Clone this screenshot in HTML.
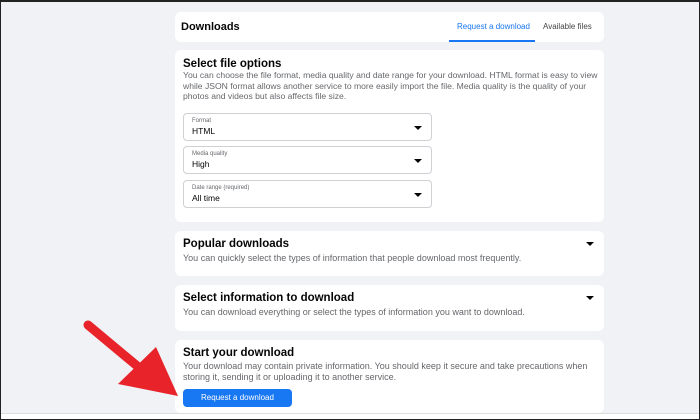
<!DOCTYPE html>
<html><head><style>
body{margin:0;width:700px;height:419px;overflow:hidden;font-family:"Liberation Sans",sans-serif;}
.frame{position:absolute;left:0;top:0;width:698px;height:417px;border:1px solid #222;border-top:2px solid #222;background:#f0f2f5;box-sizing:content-box}
.card{position:absolute;left:175px;width:429px;background:#fff;border-radius:6px;}
h2{margin:0;font-size:11.5px;font-weight:bold;color:#050505}
p{margin:0;font-size:9px;color:#65676b;line-height:10.5px}
.sel{position:absolute;left:8px;width:249px;height:28px;border:1px solid #ced0d4;border-radius:4px;box-sizing:border-box}
.sel .l{position:absolute;left:8px;top:4px;font-size:6px;color:#65676b}
.sel .v{position:absolute;left:8px;top:12px;font-size:8.5px;color:#050505}
.tri{position:absolute;width:0;height:0;border-left:4px solid transparent;border-right:4px solid transparent;border-top:4px solid #050505}
.sel .tri{right:9px;top:12px}
</style></head><body>
<div class="frame"></div>
<div class="card" style="top:12px;height:30px">
<div style="position:absolute;left:6px;top:9px;font-size:11px;font-weight:bold;color:#050505">Downloads</div>
<div style="position:absolute;left:282px;top:10px;font-size:8px;color:#1877f2">Request a download</div>
<div style="position:absolute;left:274px;top:28px;width:86px;height:2px;background:#1877f2"></div>
<div style="position:absolute;left:368px;top:10px;font-size:8px;color:#444">Available files</div>
</div>
<div class="card" style="top:50px;height:172px">
<div style="position:absolute;left:8px;top:8px;width:418px"><h2>Select file options</h2>
<p style="font-size:8.6px;white-space:nowrap">You can choose the file format, media quality and date range for your download. HTML format is easy to view<br>while JSON format allows another service to more easily import the file. Media quality is the quality of your<br>photos and videos but also affects file size.</p></div>
<div class="sel" style="top:63px"><div class="l">Format</div><div class="v">HTML</div><div class="tri"></div></div>
<div class="sel" style="top:96px"><div class="l">Media quality</div><div class="v">High</div><div class="tri"></div></div>
<div class="sel" style="top:130px"><div class="l">Date range (required)</div><div class="v">All time</div><div class="tri"></div></div>
</div>
<div class="card" style="top:231px;height:45px">
<div style="position:absolute;left:8px;top:7px;width:400px"><h2>Popular downloads</h2><p style="margin-top:3px">You can quickly select the types of information that people download most frequently.</p></div>
<div class="tri" style="left:411px;top:11px"></div></div>
<div class="card" style="top:285px;height:46px">
<div style="position:absolute;left:8px;top:7px;width:400px"><h2>Select information to download</h2><p style="margin-top:3px">You can download everything or select the types of information you want to download.</p></div>
<div class="tri" style="left:411px;top:11px"></div></div>
<div class="card" style="top:340px;height:73px">
<div style="position:absolute;left:8px;top:7px;width:410px"><h2>Start your download</h2><p style="margin-top:2px">Your download may contain private information. You should keep it secure and take precautions when<br>storing it, sending it or uploading it to another service.</p></div>
<div style="position:absolute;left:8px;top:49px;width:109px;height:18px;background:#1877f2;border-radius:4px;color:#fff;font-size:8px;text-align:center;line-height:18px">Request a download</div>
</div>
<div style="position:absolute;left:1px;top:413px;width:698px;height:5px;background:#fff;border-top:1px solid #ddd"></div>
<svg style="position:absolute;left:0;top:0" width="700" height="419">
<line x1="88" y1="325" x2="148" y2="375" stroke="#e8232a" stroke-width="9" stroke-linecap="round"/>
<polygon points="118,384 156,347 178,396" fill="#e8232a"/>
</svg>
</body></html>
